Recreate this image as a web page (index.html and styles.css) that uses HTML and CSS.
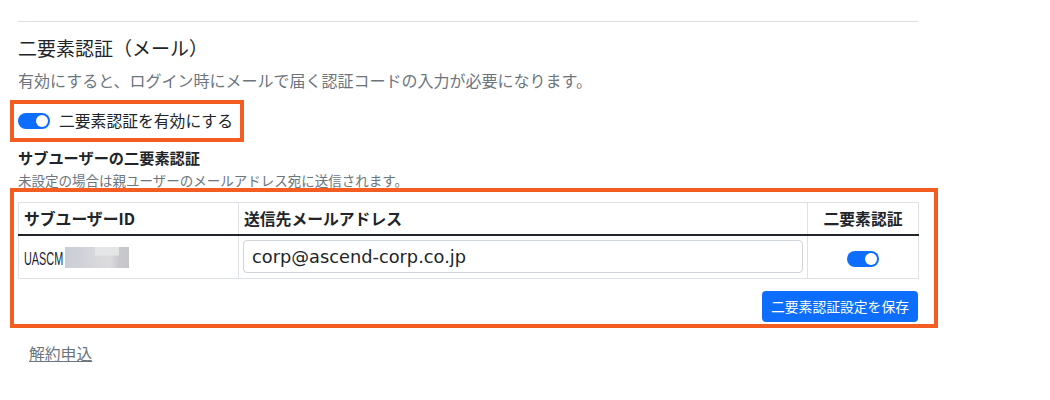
FILE: index.html
```html
<!DOCTYPE html>
<html lang="ja">
<head>
<meta charset="utf-8">
<title>二要素認証</title>
<link rel="stylesheet" href="styles.css">
</head>
<body>
<div class="page">
  <hr class="divider">
  <h2 class="title">二要素認証（メール）</h2>
  <p class="desc">有効にすると、ログイン時にメールで届く認証コードの入力が必要になります。</p>

  <div class="mark mark-switch">
    <label class="switch-row">
      <span class="switch on"><span class="knob"></span></span>
      <span class="switch-label">二要素認証を有効にする</span>
    </label>
  </div>

  <h3 class="subtitle">サブユーザーの二要素認証</h3>
  <p class="note">未設定の場合は親ユーザーのメールアドレス宛に送信されます。</p>

  <div class="mark mark-table">
    <table class="users">
      <colgroup>
        <col class="c-id">
        <col class="c-mail">
        <col class="c-flag">
      </colgroup>
      <thead>
        <tr>
          <th>サブユーザーID</th>
          <th>送信先メールアドレス</th>
          <th class="center">二要素認証</th>
        </tr>
      </thead>
      <tbody>
        <tr>
          <td class="id-cell"><span class="id-wrap"><span class="id-text">UASCM</span></span><span class="redact"></span></td>
          <td><div class="input">corp@ascend-corp.co.jp</div></td>
          <td class="center"><span class="switch on"><span class="knob"></span></span></td>
        </tr>
      </tbody>
    </table>
    <div class="actions">
      <button class="btn">二要素認証設定を保存</button>
    </div>
  </div>

  <a class="cancel" href="#">解約申込</a>
</div>
</body>
</html>
```

FILE: styles.css
```css
* { box-sizing: border-box; }

html, body {
  margin: 0;
  background: #fff;
}

body {
  font-family: "Noto Sans CJK JP", "Noto Sans", sans-serif;
  color: #212529;
}

.page {
  width: 918px;
  padding: 21px 0 0 18px;
}

.divider {
  margin: 0;
  height: 0;
  border: 0;
  border-top: 1px solid #dddfe2;
}

.title {
  margin: 14px 0 0;
  font-size: 19px;
  font-weight: 400;
  line-height: 24px;
  color: #212529;
}

.desc {
  margin: 8px 0 0;
  font-size: 16px;
  line-height: 24px;
  color: #6c757d;
}

.mark {
  border: 4px solid #f45d22;
}

.mark-switch {
  display: inline-flex;
  margin: 8px 0 0 -8px;
  height: 42px;
  padding: 0 7px 0 4px;
  align-items: center;
}

.switch-row {
  display: flex;
  align-items: center;
  gap: 9px;
}

.switch {
  display: inline-flex;
  align-items: center;
  justify-content: flex-end;
  width: 32px;
  height: 16px;
  border-radius: 8px;
  background: #0d6efd;
  padding: 0 2px;
  vertical-align: middle;
}

.knob {
  width: 12px;
  height: 12px;
  border-radius: 50%;
  background: #fff;
}

.switch-label {
  font-size: 15.8px;
  line-height: 24px;
  color: #212529;
}

.subtitle {
  margin: 5px 0 0;
  font-size: 15.2px;
  font-weight: 700;
  line-height: 20px;
  color: #212529;
}

.note {
  margin: 5px 0 0;
  font-size: 13.5px;
  line-height: 16px;
  color: #6c757d;
}

.mark-table {
  margin-left: -8px;
  width: 928px;
  padding: 10px 15px 2px 4px;
}

.users {
  width: 900px;
  table-layout: fixed;
  border-collapse: collapse;
}

.c-id { width: 220px; }
.c-mail { width: 569px; }
.c-flag { width: 111px; }

.users th,
.users td {
  border: 1px solid #dee2e6;
  text-align: left;
}

.users th {
  padding: 4px 5px;
  height: 32px;
  font-size: 15.8px;
  font-weight: 700;
  line-height: 23px;
  border-bottom: 2px solid #212529;
}

.users td {
  padding: 4px 4px 5px;
  height: 42px;
  vertical-align: middle;
}

.users .center { text-align: center; }

.id-cell {
  white-space: nowrap;
  padding-left: 5px !important;
}

.id-wrap {
  display: inline-block;
  width: 41px;
  vertical-align: middle;
  overflow: visible;
}

.id-text {
  display: inline-block;
  font-family: "Liberation Sans", sans-serif;
  font-size: 17.5px;
  line-height: 20px;
  color: #1d2233;
  transform: scaleX(0.62);
  transform-origin: left center;
}

.redact {
  display: inline-block;
  width: 64px;
  height: 21px;
  vertical-align: middle;
  background:
    linear-gradient(180deg, rgba(230,232,232,0.9) 0%, rgba(230,232,232,0.9) 40%, rgba(200,200,206,0) 41%) 30px 0 / 24px 100% no-repeat,
    linear-gradient(90deg, #cbcdd6 0%, #d2d3d9 30%, #d8d8dc 50%, #dcdcdf 70%, #c9c9cd 85%, #c6c6ca 100%);
}

.input {
  height: 33px;
  width: 560px;
  padding: 0 8px;
  border: 1px solid #ced4da;
  border-radius: 4px;
  font-family: "DejaVu Sans", sans-serif;
  font-size: 17.8px;
  line-height: 31px;
  color: #212529;
}

.actions {
  display: flex;
  justify-content: flex-end;
  width: 900px;
  margin-top: 12px;
}

.btn {
  height: 31px;
  padding: 0 9px;
  border: 0;
  border-radius: 4px;
  background: #0d6efd;
  color: #fff;
  font-family: "Noto Sans CJK JP", sans-serif;
  font-size: 13.8px;
  line-height: 31px;
}

.cancel {
  display: inline-block;
  margin: 14px 0 0 11px;
  font-size: 15.8px;
  line-height: 24px;
  color: #6c757d;
  text-decoration: underline;
}
```
